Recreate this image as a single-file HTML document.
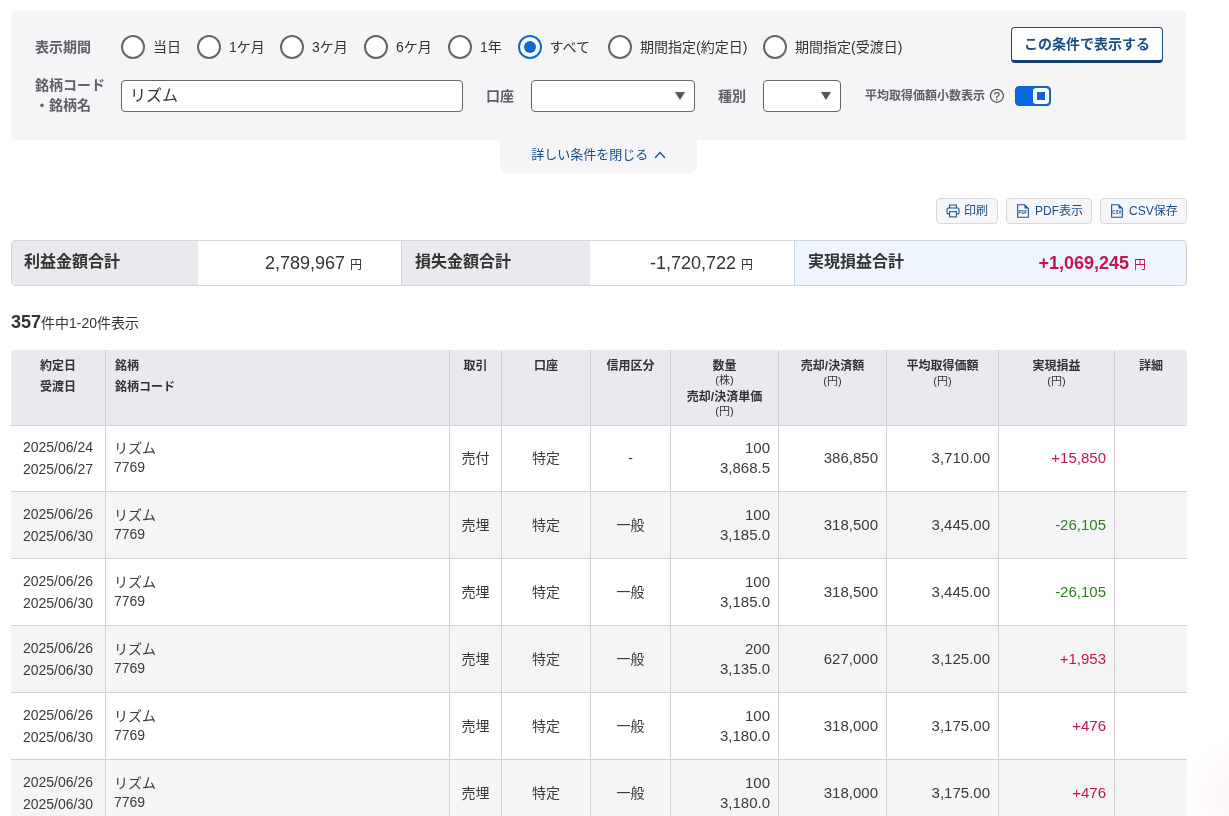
<!DOCTYPE html>
<html lang="ja">
<head>
<meta charset="utf-8">
<title>実現損益</title>
<style>
*{box-sizing:border-box;margin:0;padding:0}
html,body{width:1229px;height:816px;overflow:hidden;background:#fff}
body{font-family:"Liberation Sans","Noto Sans CJK JP",sans-serif;color:#333;font-size:14px;position:relative;will-change:transform}
.abs{position:absolute}
.panel{left:11px;top:11px;width:1175px;height:129px;background:#f5f5f7;border-radius:4px}
.lbl{font-weight:bold;font-size:14px;color:#5c6068;line-height:20px;white-space:nowrap}
.radio{width:24px;height:24px;border:2px solid #666;border-radius:50%;background:#fff}
.radio.on{border-color:#0b6bd3}
.radio.on::after{content:"";position:absolute;left:4px;top:4px;width:12px;height:12px;border-radius:50%;background:#0b6bd3}
.rl{font-size:14px;line-height:20px;color:#333;white-space:nowrap}
.inp{background:#fff;border:1px solid #666;border-radius:4px;height:32px}
.tri{width:0;height:0;border-left:5px solid transparent;border-right:5px solid transparent;border-top:8px solid #555}
.btn-main{left:1011px;top:27px;width:152px;height:36px;background:#fff;border:1px solid #1a4f86;border-bottom:3px solid #143f70;border-radius:4px;color:#1a4f86;font-weight:bold;font-size:14px;text-align:center;line-height:32px}
.tab{left:500px;top:140px;width:197px;height:33px;padding-top:1px;background:#f5f5f7;border-radius:0 0 8px 8px;color:#1a4f86;font-size:13px;text-align:center;line-height:28px}
.sbtn{top:198px;height:26px;background:#f6f6f8;border:1px solid #d6d9de;border-radius:4px;color:#1a4f86;font-size:12px;line-height:23px;white-space:nowrap}
.sum{top:240px;height:46px}
.sum .l{font-weight:bold;font-size:16px;color:#333;line-height:41px;padding-left:12px}
table{position:absolute;left:11px;top:350px;width:1176px;border-collapse:separate;border-spacing:0;table-layout:fixed}
th{background:#e8eaee;font-size:12px;font-weight:bold;color:#333;vertical-align:top;padding:8px 4px 0;height:75px;line-height:17px;border-left:1px solid #cfd1d5;text-align:center}
th.two{line-height:20.5px;padding-top:6px}
th:first-child,td:first-child{border-left:none}
th:first-child{border-top-left-radius:4px}
th:last-child{border-top-right-radius:4px}
th .u{font-weight:normal;font-size:11px;line-height:13px;display:block}
td{height:67px;border-left:1px solid #cfd1d5;border-top:1px solid #cfd1d5;font-size:14px;color:#3a3a3a;vertical-align:middle;text-align:center;line-height:20px;padding-bottom:1px}
tr.first td{height:66px;padding-bottom:2px}
tr.first td.nm{padding-bottom:1px}
tr.first td.dt{padding-bottom:1px}
tr.alt td{background:#f5f5f7}
td.r{text-align:right;padding-right:8px;font-size:15px}
td.nm{text-align:left;padding-left:8px;line-height:19px}
td.nm small{font-size:14px;display:block}
td.dt{line-height:22.5px;padding-bottom:0}
.pos{color:#c4154b}
.neg{color:#2e7d1e}
</style>
</head>
<body>
<div class="abs panel"></div>

<!-- row 1 -->
<div class="abs lbl" style="left:35px;top:37px">表示期間</div>
<div class="abs radio" style="left:121px;top:35px"></div><div class="abs rl" style="left:153px;top:37px">当日</div>
<div class="abs radio" style="left:197px;top:35px"></div><div class="abs rl" style="left:229px;top:37px">1ケ月</div>
<div class="abs radio" style="left:280px;top:35px"></div><div class="abs rl" style="left:312px;top:37px">3ケ月</div>
<div class="abs radio" style="left:364px;top:35px"></div><div class="abs rl" style="left:396px;top:37px">6ケ月</div>
<div class="abs radio" style="left:448px;top:35px"></div><div class="abs rl" style="left:480px;top:37px">1年</div>
<div class="abs radio on" style="left:518px;top:35px"></div><div class="abs rl" style="left:549.5px;top:37px">すべて</div>
<div class="abs radio" style="left:608px;top:35px"></div><div class="abs rl" style="left:640px;top:37px">期間指定(約定日)</div>
<div class="abs radio" style="left:763px;top:35px"></div><div class="abs rl" style="left:795px;top:37px">期間指定(受渡日)</div>
<div class="abs btn-main">この条件で表示する</div>

<!-- row 2 -->
<div class="abs lbl" style="left:35px;top:75px">銘柄コード</div>
<div class="abs lbl" style="left:35px;top:95px">・銘柄名</div>
<div class="abs inp" style="left:121px;top:80px;width:342px"></div>
<div class="abs" style="left:130px;top:84px;font-size:16px;line-height:24px;color:#333">リズム</div>
<div class="abs lbl" style="left:486px;top:86px">口座</div>
<div class="abs inp" style="left:531px;top:80px;width:164px"></div>
<div class="abs tri" style="left:675px;top:92px"></div>
<div class="abs lbl" style="left:718px;top:86px">種別</div>
<div class="abs inp" style="left:763px;top:80px;width:78px"></div>
<div class="abs tri" style="left:821px;top:92px"></div>
<div class="abs lbl" style="left:865px;top:86px;font-size:12px">平均取得価額小数表示</div>
<svg class="abs" style="left:989px;top:88px" width="16" height="16" viewBox="0 0 16 16"><circle cx="7.9" cy="7.8" r="6.5" fill="none" stroke="#555" stroke-width="1.3"/><text x="7.9" y="11.6" text-anchor="middle" font-size="11" fill="#4a4a4a" stroke="#4a4a4a" stroke-width="0.25" font-family="Liberation Sans, sans-serif">?</text></svg>
<div class="abs" style="left:1015px;top:86px;width:36px;height:20px;border-radius:4px;background:#0b68df;border:1px solid #1a5fae"></div>
<div class="abs" style="left:1033px;top:88px;width:16px;height:16px;border-radius:3.5px;background:#fff"></div>
<div class="abs" style="left:1037px;top:92px;width:8px;height:8px;background:#1462d2"></div>

<div class="abs tab">詳しい条件を閉じる <svg width="12" height="8" viewBox="0 0 12 8" style="margin-left:2px"><path d="M1 7 L6 1.5 L11 7" fill="none" stroke="#1a4f86" stroke-width="1.3"/></svg></div>

<!-- small buttons -->
<div class="abs sbtn" style="left:936px;width:62px"><svg class="abs" style="left:9px;top:5px" width="14" height="14" viewBox="0 0 15 15" fill="none" stroke="#1a4f86" stroke-width="1.15"><path d="M3.9 4.3V1.1h7.2v3.2"/><path d="M3.9 10.6H2.3Q1.1 10.600 1.1 9.4V5.500Q1.100 4.300 2.300 4.300h10.400Q13.900 4.300 13.900 5.500v3.900Q13.900 10.600 12.700 10.600H11.100"/><rect x="3.900" y="8.200" width="7.200" height="5.600"/><circle cx="3.200" cy="6.300" r="0.500" fill="#1a4f86" stroke="none"/></svg><span class="abs" style="left:27px;top:1px">印刷</span></div>
<div class="abs sbtn" style="left:1006px;width:86px"><svg class="abs" style="left:10px;top:5px" width="12" height="14" viewBox="0 0 13 15" preserveAspectRatio="none"><path d="M0.700 0.800H8.200L12.300 4.900V14.200H0.700Z" fill="none" stroke="#1a4f86" stroke-width="1.15"/><path d="M8.200 0.800V4.900H12.300Z" fill="#1a4f86"/><text x="6.400" y="10.300" text-anchor="middle" font-size="4.8" font-weight="bold" fill="#1a4f86" font-family="Liberation Sans, sans-serif">PDF</text></svg><span class="abs" style="left:28px;top:1px">PDF表示</span></div>
<div class="abs sbtn" style="left:1100px;width:87px"><svg class="abs" style="left:10px;top:5px" width="12" height="14" viewBox="0 0 13 15" preserveAspectRatio="none"><path d="M0.700 0.800H8.200L12.300 4.900V14.200H0.700Z" fill="none" stroke="#1a4f86" stroke-width="1.15"/><path d="M8.200 0.800V4.900H12.300Z" fill="#1a4f86"/><text x="6.400" y="10.300" text-anchor="middle" font-size="4.8" font-weight="bold" fill="#1a4f86" font-family="Liberation Sans, sans-serif">CSV</text></svg><span class="abs" style="left:28px;top:1px">CSV保存</span></div>

<!-- summary -->
<div class="abs sum" style="left:11px;width:784px;border:1px solid #d4d6da;border-radius:4px 0 0 4px;background:#fff"></div>
<div class="abs sum" style="left:12px;top:241px;height:44px;width:186px;background:#e8eaee"><div class="l">利益金額合計</div></div>
<div class="abs sum" style="left:402px;top:241px;height:44px;width:188px;background:#e8eaee"><div class="l" style="padding-left:13px">損失金額合計</div></div>
<div class="abs sum" style="left:794px;width:393px;border:1px solid #cfd4da;border-radius:0 4px 4px 0;background:#eef5fd"><div class="l" style="padding-left:13px">実現損益合計</div></div>
<div class="abs" style="left:401px;top:241px;width:1px;height:44px;background:#d4d6da"></div>
<div class="abs" style="left:200px;top:251px;width:162px;text-align:right;font-size:18px;line-height:24px;color:#333">2,789,967 <span style="font-size:12px">円</span></div>
<div class="abs" style="left:592px;top:251px;width:161px;text-align:right;font-size:18px;line-height:24px;color:#333">-1,720,722 <span style="font-size:12px">円</span></div>
<div class="abs pos" style="left:984px;top:251px;width:162px;text-align:right;font-size:18px;line-height:24px;font-weight:bold">+1,069,245 <span style="font-size:12px;font-weight:normal">円</span></div>

<div class="abs" style="left:11px;top:310px;font-size:14px;line-height:24px;color:#333"><b style="font-size:18px">357</b>件中1-20件表示</div>

<table>
<colgroup><col style="width:94px"><col style="width:344px"><col style="width:52px"><col style="width:89px"><col style="width:80px"><col style="width:108px"><col style="width:108px"><col style="width:112px"><col style="width:116px"><col style="width:73px"></colgroup>
<tr>
<th class="two">約定日<br>受渡日</th>
<th class="two" style="text-align:left;padding-left:9px">銘柄<br>銘柄コード</th>
<th>取引</th><th>口座</th><th>信用区分</th>
<th>数量<span class="u" style="position:relative;top:-1.5px">(株)</span><span style="position:relative;top:1px">売却/決済単価</span><span class="u">(円)</span></th>
<th>売却/決済額<span class="u">(円)</span></th>
<th>平均取得価額<span class="u">(円)</span></th>
<th>実現損益<span class="u">(円)</span></th>
<th>詳細</th>
</tr>
<tr class="first"><td class="dt">2025/06/24<br>2025/06/27</td><td class="nm">リズム<small>7769</small></td><td>売付</td><td>特定</td><td>-</td><td class="r">100<br>3,868.5</td><td class="r">386,850</td><td class="r">3,710.00</td><td class="r pos">+15,850</td><td></td></tr>
<tr class="alt"><td class="dt">2025/06/26<br>2025/06/30</td><td class="nm">リズム<small>7769</small></td><td>売埋</td><td>特定</td><td>一般</td><td class="r">100<br>3,185.0</td><td class="r">318,500</td><td class="r">3,445.00</td><td class="r neg">-26,105</td><td></td></tr>
<tr><td class="dt">2025/06/26<br>2025/06/30</td><td class="nm">リズム<small>7769</small></td><td>売埋</td><td>特定</td><td>一般</td><td class="r">100<br>3,185.0</td><td class="r">318,500</td><td class="r">3,445.00</td><td class="r neg">-26,105</td><td></td></tr>
<tr class="alt"><td class="dt">2025/06/26<br>2025/06/30</td><td class="nm">リズム<small>7769</small></td><td>売埋</td><td>特定</td><td>一般</td><td class="r">200<br>3,135.0</td><td class="r">627,000</td><td class="r">3,125.00</td><td class="r pos">+1,953</td><td></td></tr>
<tr><td class="dt">2025/06/26<br>2025/06/30</td><td class="nm">リズム<small>7769</small></td><td>売埋</td><td>特定</td><td>一般</td><td class="r">100<br>3,180.0</td><td class="r">318,000</td><td class="r">3,175.00</td><td class="r pos">+476</td><td></td></tr>
<tr class="alt"><td class="dt">2025/06/26<br>2025/06/30</td><td class="nm">リズム<small>7769</small></td><td>売埋</td><td>特定</td><td>一般</td><td class="r">100<br>3,180.0</td><td class="r">318,000</td><td class="r">3,175.00</td><td class="r pos">+476</td><td></td></tr>
</table>
<div class="abs" style="left:1185px;top:720px;width:44px;height:96px;background:radial-gradient(circle at 62px 76px, rgba(235,70,70,0.07), rgba(235,70,70,0) 62px)"></div>
</body>
</html>
